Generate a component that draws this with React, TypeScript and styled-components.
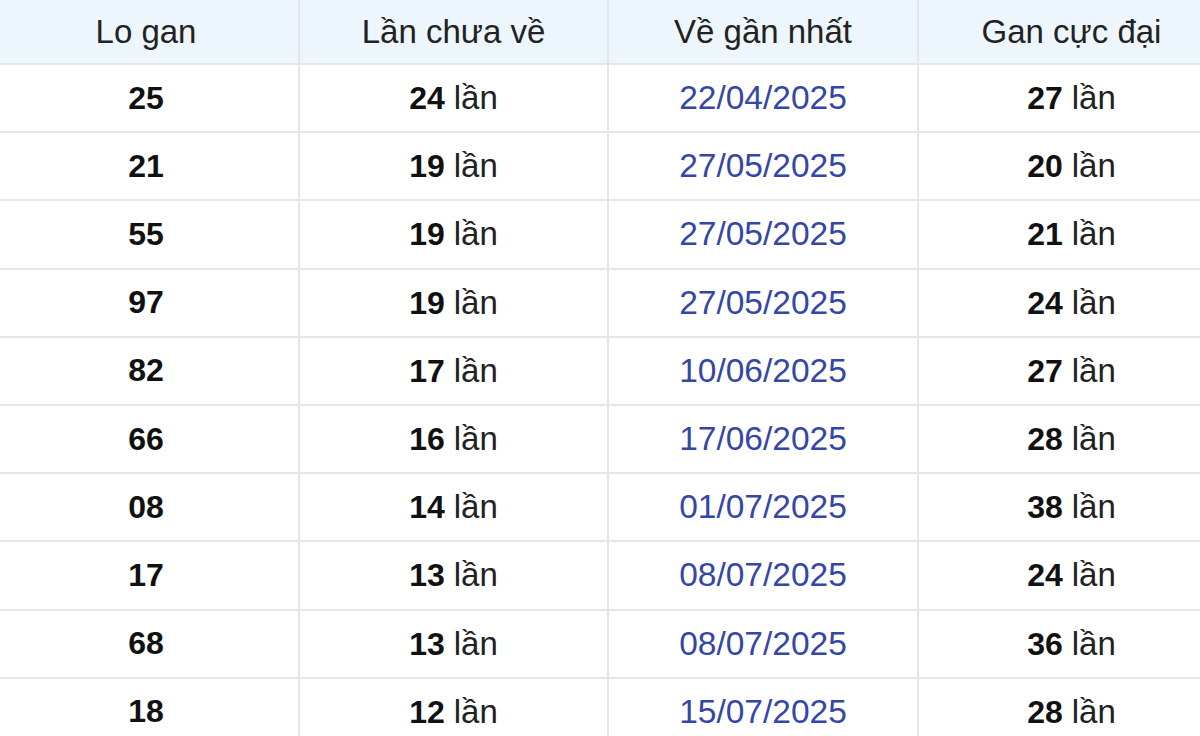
import React from "react";
import styled, { createGlobalStyle } from "styled-components";

const Global = createGlobalStyle`
  html, body { margin: 0; padding: 0; background: #fff; overflow: hidden; }
  body { font-family: "Liberation Sans", Arial, sans-serif; }
`;

const Wrap = styled.div`
  width: 1232px;
  margin-left: -8px;
`;

const Table = styled.table`
  width: 100%;
  border-collapse: collapse;
  table-layout: fixed;
  font-family: "Liberation Sans", Arial, sans-serif;
`;

const Col = styled.col<{ $w: number }>`
  width: ${(p) => p.$w}px;
`;

const Th = styled.th`
  background: #eef6fd;
  color: #222;
  font-weight: normal;
  font-size: 33px;
  height: 63px;
  padding: 0;
  border: 2px solid #e4e6e9;
  border-top: none;
  text-align: center;
  vertical-align: middle;
`;

const Td = styled.td`
  height: 66.2px;
  padding: 0;
  border: 2px solid #e4e6e9;
  text-align: center;
  vertical-align: middle;
  font-size: 32px;
  color: #111;
`;

const Num = styled.b`
  font-weight: bold;
  color: #111;
`;

const Unit = styled.span`
  font-weight: normal;
  color: #222;
  font-size: 33px;
`;

const DateText = styled.span`
  color: #3446a6;
  font-size: 33.5px;
`;

const rows: [string, number, string, number][] = [
  ["25", 24, "22/04/2025", 27],
  ["21", 19, "27/05/2025", 20],
  ["55", 19, "27/05/2025", 21],
  ["97", 19, "27/05/2025", 24],
  ["82", 17, "10/06/2025", 27],
  ["66", 16, "17/06/2025", 28],
  ["08", 14, "01/07/2025", 38],
  ["17", 13, "08/07/2025", 24],
  ["68", 13, "08/07/2025", 36],
  ["18", 12, "15/07/2025", 28],
];

export default function App() {
  return (
    <>
      <Global />
      <Wrap>
        <Table>
          <colgroup>
            <Col $w={306} />
            <Col $w={309} />
            <Col $w={310} />
            <Col $w={307} />
          </colgroup>
          <thead>
            <tr>
              <Th>Lo gan</Th>
              <Th>Lần chưa về</Th>
              <Th>Về gần nhất</Th>
              <Th>Gan cực đại</Th>
            </tr>
          </thead>
          <tbody>
            {rows.map(([lo, lan, date, max]) => (
              <tr key={lo}>
                <Td>
                  <Num>{lo}</Num>
                </Td>
                <Td>
                  <Num>{lan}</Num> <Unit>lần</Unit>
                </Td>
                <Td>
                  <DateText>{date}</DateText>
                </Td>
                <Td>
                  <Num>{max}</Num> <Unit>lần</Unit>
                </Td>
              </tr>
            ))}
          </tbody>
        </Table>
      </Wrap>
    </>
  );
}
